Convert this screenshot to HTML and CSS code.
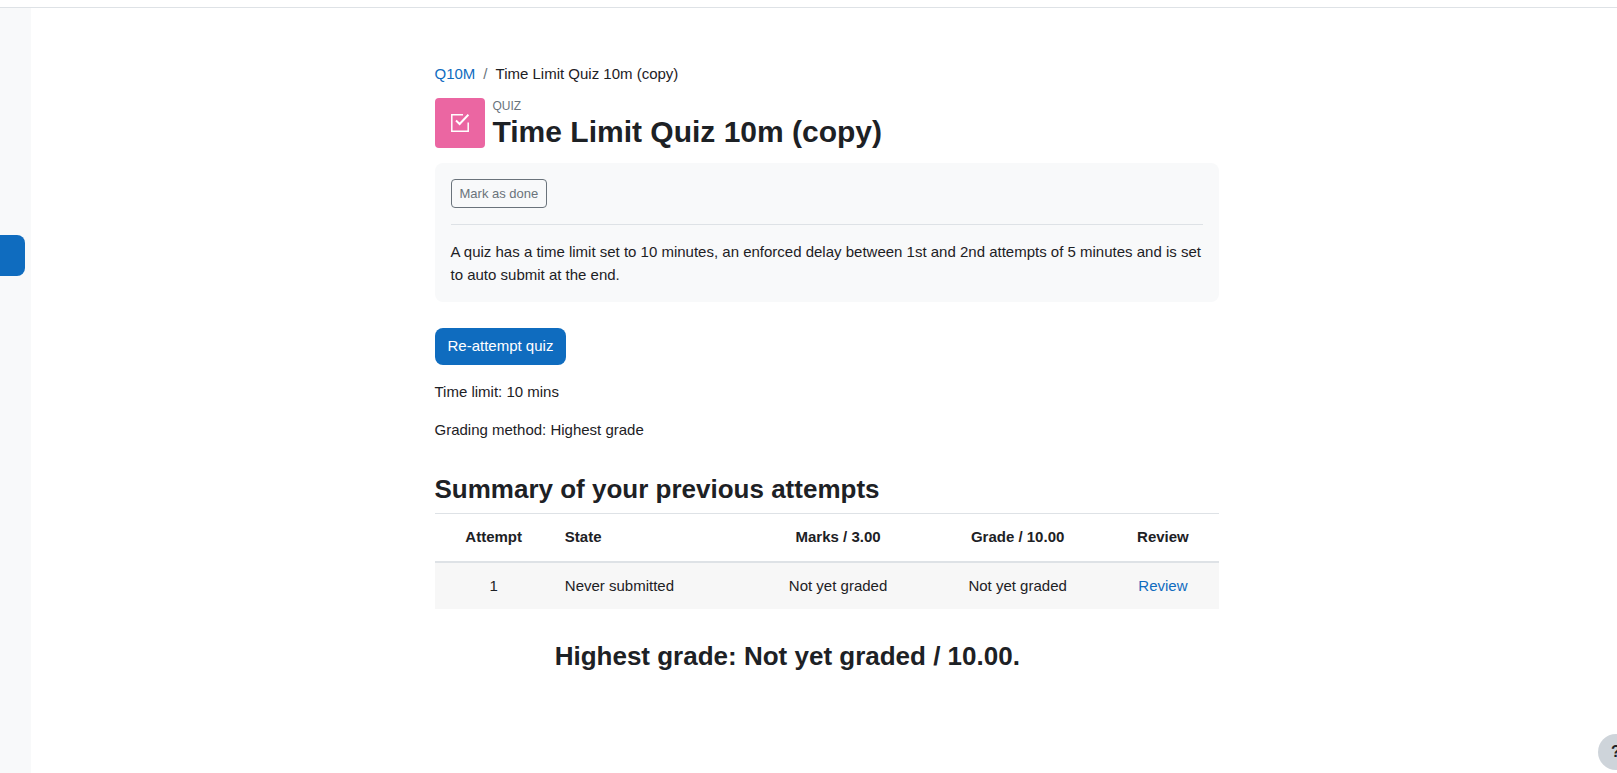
FILE: index.html
```html
<!DOCTYPE html>
<html lang="en">
<head>
    <meta charset="UTF-8">
    <meta name="viewport" content="width=device-width, initial-scale=1.0">
    <title>Time Limit Quiz 10m (copy)</title>
    <link rel="stylesheet" href="styles.css">
</head>
<body>
    <div class="navbar"></div>

    <div class="page">
        <aside class="drawer">
            <button class="drawer-toggle" type="button" aria-label="Open course index"></button>
        </aside>

        <main class="main">
            <div class="content">
                <nav class="breadcrumb">
                    <a href="#">Q10M</a>
                    <span class="divider">/</span>
                    <span>Time Limit Quiz 10m (copy)</span>
                </nav>

                <header class="page-header">
                    <div class="activity-icon">
                        <svg width="18" height="18" viewBox="0 0 18 18" fill="none" stroke="#fff" stroke-width="1.5">
                            <path d="M12 .8H.8v16.4h16.4V8.5"/>
                            <path d="M5 6.6l3.6 3.4L17.4.8" stroke-width="2"/>
                        </svg>
                    </div>
                    <div>
                        <div class="activity-type">QUIZ</div>
                        <h1>Time Limit Quiz 10m (copy)</h1>
                    </div>
                </header>

                <section class="activity-info">
                    <button class="btn-outline" type="button">Mark as done</button>
                    <p class="description">A quiz has a time limit set to 10 minutes, an enforced delay between 1st and 2nd attempts of 5 minutes and is set to auto submit at the end.</p>
                </section>

                <button class="btn-primary" type="button">Re-attempt quiz</button>

                <div class="quiz-info">
                    <p>Time limit: 10 mins</p>
                    <p>Grading method: Highest grade</p>
                </div>

                <h2>Summary of your previous attempts</h2>
                <table class="attempts">
                    <thead>
                        <tr>
                            <th>Attempt</th>
                            <th class="left">State</th>
                            <th>Marks / 3.00</th>
                            <th>Grade / 10.00</th>
                            <th>Review</th>
                        </tr>
                    </thead>
                    <tbody>
                        <tr>
                            <td>1</td>
                            <td class="left">Never submitted</td>
                            <td>Not yet graded</td>
                            <td>Not yet graded</td>
                            <td><a href="#">Review</a></td>
                        </tr>
                    </tbody>
                </table>

                <div class="feedback">
                    <h2>Highest grade: Not yet graded / 10.00.</h2>
                </div>
            </div>
        </main>
    </div>

    <button class="help-button" type="button" aria-label="Help">?</button>
</body>
</html>
```
FILE: styles.css
```css
:root {
    --primary-color: #0f6cbf;
    --text-color: #1d2125;
    --muted-color: #6a737b;
    --border-color: #dee2e6;
    --light-color: #f8f9fa;
    --icon-color: #eb66a2;
}

* {
    margin: 0;
    padding: 0;
    box-sizing: border-box;
}

body {
    min-height: 100vh;
    display: flex;
    flex-direction: column;
    background-color: #fff;
    color: var(--text-color);
    font-family: "Liberation Sans", Arial, sans-serif;
    font-size: 15px;
    line-height: 23px;
}

button {
    font-family: inherit;
    cursor: pointer;
}

a {
    color: var(--primary-color);
    text-decoration: none;
}

a:hover {
    text-decoration: underline;
}

h1 {
    font-size: 30px;
    line-height: 32px;
}

h2 {
    font-size: 26px;
    line-height: 32px;
}

.navbar {
    height: 8px;
    border-bottom: 1px solid var(--border-color);
}

.page {
    flex: 1;
    display: flex;
}

.drawer {
    flex: 0 0 31px;
    padding-top: 227px;
    background-color: var(--light-color);
}

.drawer-toggle {
    display: block;
    width: 25px;
    height: 41px;
    border: none;
    border-radius: 0 8px 8px 0;
    background-color: var(--primary-color);
}

.main {
    flex: 1;
    padding: 54px 10px 40px 15px;
}

.content {
    max-width: 784px;
    margin: 0 auto;
}

.breadcrumb {
    display: flex;
    gap: 8px;
    margin-bottom: 13px;
}

.breadcrumb .divider {
    color: var(--muted-color);
}

.page-header {
    display: flex;
    align-items: center;
    gap: 8px;
    margin-bottom: 15px;
}

.activity-icon {
    display: flex;
    align-items: center;
    justify-content: center;
    width: 50px;
    height: 50px;
    border-radius: 4px;
    background-color: var(--icon-color);
}

.activity-type {
    margin-bottom: 2px;
    color: var(--muted-color);
    font-size: 12px;
    line-height: 16px;
}

.activity-info {
    padding: 16px;
    margin-bottom: 26px;
    border-radius: 8px;
    background-color: var(--light-color);
}

.btn-outline {
    display: block;
    padding: 4px 8px;
    border: 1px solid var(--muted-color);
    border-radius: 4px;
    background-color: transparent;
    color: var(--muted-color);
    font-size: 13px;
    line-height: 19px;
}

.description {
    margin-top: 16px;
    padding-top: 15px;
    border-top: 1px solid var(--border-color);
}

.btn-primary {
    display: block;
    padding: 6px 13px 8px;
    border: none;
    border-radius: 8px;
    background-color: var(--primary-color);
    color: #fff;
    font-size: 15px;
    line-height: 23px;
}

.quiz-info {
    margin: 15px 0 32px;
}

.quiz-info p + p {
    margin-top: 15px;
}

.attempts {
    width: 100%;
    margin-top: 8px;
    border-collapse: collapse;
}

.attempts th,
.attempts td {
    padding: 11px 12px 12px;
    border-top: 1px solid var(--border-color);
    text-align: center;
}

.attempts thead th {
    padding-bottom: 13px;
    border-bottom: 2px solid var(--border-color);
}

.attempts tbody tr {
    background-color: #f7f7f7;
}

.attempts .left {
    text-align: left;
}

.feedback {
    width: 90%;
    margin-top: 31px;
    text-align: center;
}

.help-button {
    position: fixed;
    right: -17px;
    bottom: 3px;
    width: 36px;
    height: 36px;
    border: none;
    border-radius: 50%;
    background-color: #ced4da;
    color: var(--text-color);
    font-size: 16px;
    font-weight: bold;
}
```
